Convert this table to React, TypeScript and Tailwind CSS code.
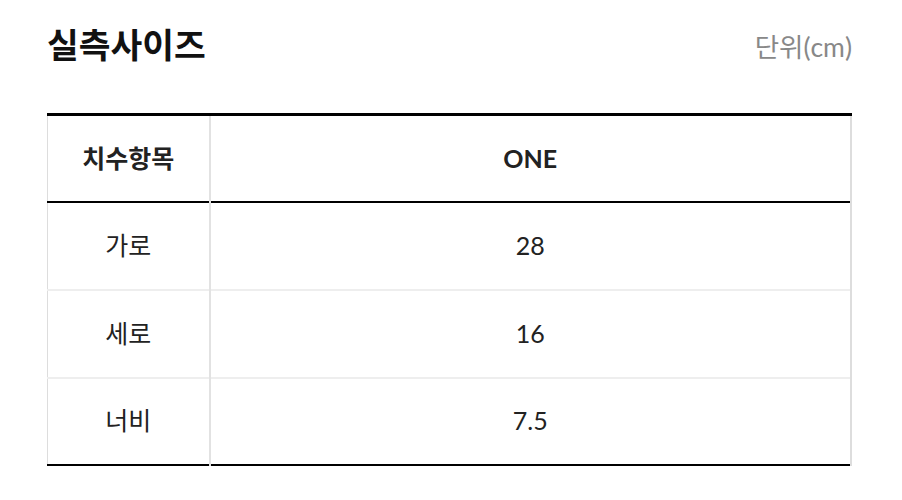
import React from "react";

const rows = [
    { label: "가로", value: "28" },
    { label: "세로", value: "16" },
    { label: "너비", value: "7.5" },
];

export default function App() {
    return (
        <div
            className="min-h-[500px] w-[902px] bg-white text-[#222]"
            style={{ fontFamily: 'Lato, "Noto Sans CJK KR", sans-serif' }}
        >
            <div className="ml-[47px] w-[805px] pt-[18px]">
                <div className="flex items-center justify-between">
                    <h2 className="text-[34.5px] font-bold leading-[54px] text-[#111]">실측사이즈</h2>
                    <span className="mt-[6px] text-[26.5px] text-[#888]">단위(cm)</span>
                </div>

                <table className="mt-[41px] w-full border-collapse border-t-[3px] border-t-black border-b-2 border-b-black text-[25px]">
                    <thead>
                        <tr className="h-[87px] border-b-2 border-b-black">
                            <th className="w-[162px] border-l border-r-2 border-l-[#ddd] border-r-[#e2e2e2] font-bold">
                                치수항목
                            </th>
                            <th className="border-r-2 border-r-[#ddd] font-bold">ONE</th>
                        </tr>
                    </thead>
                    <tbody>
                        {rows.map((row, i) => (
                            <tr
                                key={row.label}
                                className={
                                    i < rows.length - 1
                                        ? "h-[88px] border-b-2 border-b-[#eee]"
                                        : "h-[87px]"
                                }
                            >
                                <td className="border-l border-r-2 border-l-[#ddd] border-r-[#e2e2e2] text-center">
                                    {row.label}
                                </td>
                                <td className="border-r-2 border-r-[#ddd] text-center">{row.value}</td>
                            </tr>
                        ))}
                    </tbody>
                </table>
            </div>
        </div>
    );
}
